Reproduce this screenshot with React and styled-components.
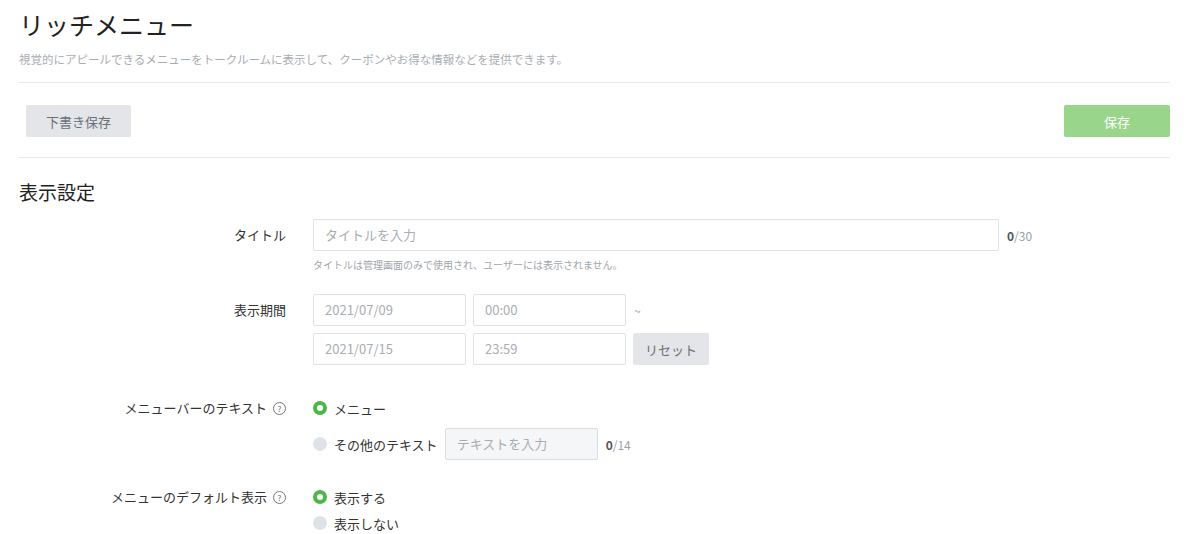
import React from 'react';
import styled, { createGlobalStyle } from 'styled-components';

const Global = createGlobalStyle`
  body { margin: 0; background: #fff; font-family: "Noto Sans CJK JP", "Noto Sans", sans-serif; color: #333; }
`;

const Page = styled.div`
  padding: 6px 30px 0 19px;
`;

const Title = styled.h1`
  margin: 0;
  font-size: 25px;
  font-weight: 400;
  line-height: 36px;
  color: #222;
`;

const Sub = styled.p`
  margin: 9px 0 0;
  font-size: 11.5px;
  color: #a8adb3;
  line-height: 16px;
`;

const Divider = styled.hr`
  border: none;
  border-top: 1px solid #e6e8eb;
  margin: ${p => p.$m || '0'};
`;

const Toolbar = styled.div`
  display: flex;
  justify-content: space-between;
  padding: 0 0 0 7px;
  margin: 22px 0 20px;
`;

const Button = styled.button`
  height: 32px;
  width: ${p => p.$w || '105px'};
  border: none;
  border-radius: 2px;
  font-family: inherit;
  font-size: 13px;
  background: ${p => (p.$primary ? '#99d58a' : '#e3e5e8')};
  color: ${p => (p.$primary ? '#fff' : '#6b7078')};
`;

const Section = styled.h2`
  margin: 20px 0 13px;
  font-size: 19px;
  font-weight: 400;
  color: #222;
  line-height: 28px;
`;

const Row = styled.div`
  display: grid;
  grid-template-columns: 267px 1fr;
  column-gap: 27px;
  margin-bottom: ${p => p.$mb || '0'};
`;

const Label = styled.div`
  text-align: right;
  font-size: 13px;
  color: #333;
  line-height: 32px;
  display: flex;
  justify-content: flex-end;
  align-items: center;
  gap: 6px;
  height: ${p => p.$h || '32px'};
`;

const Help = styled.span`
  width: 11px;
  height: 11px;
  border: 1px solid #777;
  border-radius: 50%;
  font-size: 8px;
  line-height: 11px;
  text-align: center;
  color: #666;
  display: inline-block;
`;

const Field = styled.div`
  display: flex;
  flex-direction: column;
  gap: ${p => p.$gap || '0'};
`;

const Line = styled.div`
  display: flex;
  align-items: center;
  gap: 7px;
  height: ${p => p.$h || 'auto'};
`;

const Input = styled.div`
  box-sizing: border-box;
  width: ${p => p.$w};
  height: 32px;
  border: 1px solid ${p => (p.$disabled ? '#d9dce0' : '#dfe1e5')};
  background: ${p => (p.$disabled ? '#f5f6f7' : '#fff')};
  border-radius: 2px;
  padding: 0 11px;
  font-size: 13px;
  line-height: 30px;
  color: #a8adb3;
`;

const Count = styled.span`
  font-size: 12px;
  color: #9a9fa6;
  margin-left: 1px;
  b { color: #555; font-weight: 700; }
`;

const Note = styled.div`
  font-size: 10px;
  color: #a0a5ab;
  margin-top: 6px;
`;

const Radio = styled.span`
  box-sizing: border-box;
  width: 14px;
  height: 14px;
  border-radius: 50%;
  background: ${p => (p.$on ? '#fff' : '#dfe2e6')};
  border: ${p => (p.$on ? '4px solid #4cb648' : 'none')};
  flex: none;
`;

const RadioText = styled.span`
  font-size: 13px;
  color: #333;
`;

const Choice = ({ on, children }) => (
  <Line $h="26px">
    <Radio $on={on} />
    <RadioText>{children}</RadioText>
  </Line>
);

export default function App() {
  return (
    <Page>
      <Global />
      <Title>リッチメニュー</Title>
      <Sub>視覚的にアピールできるメニューをトークルームに表示して、クーポンやお得な情報などを提供できます。</Sub>
      <Divider $m="15px 0 0" />
      <Toolbar>
        <Button>下書き保存</Button>
        <Button $primary $w="106px">保存</Button>
      </Toolbar>
      <Divider />
      <Section>表示設定</Section>
      <Row $mb="22px">
        <Label>タイトル</Label>
        <Field>
          <Line>
            <Input $w="686px">タイトルを入力</Input>
            <Count><b>0</b>/30</Count>
          </Line>
          <Note>タイトルは管理画面のみで使用され、ユーザーには表示されません。</Note>
        </Field>
      </Row>
      <Row $mb="30px">
        <Label>表示期間</Label>
        <Field $gap="7px">
          <Line>
            <Input $w="153px">2021/07/09</Input>
            <Input $w="153px">00:00</Input>
            <Count>~</Count>
          </Line>
          <Line>
            <Input $w="153px">2021/07/15</Input>
            <Input $w="153px">23:59</Input>
            <Button $w="76px">リセット</Button>
          </Line>
        </Field>
      </Row>
      <Row $mb="24px">
        <Label $h="26px">メニューバーのテキスト <Help>?</Help></Label>
        <Field $gap="7px">
          <Choice on>メニュー</Choice>
          <Line>
            <Radio />
            <RadioText>その他のテキスト</RadioText>
            <Input $w="153px" $disabled>テキストを入力</Input>
            <Count><b>0</b>/14</Count>
          </Line>
        </Field>
      </Row>
      <Row>
        <Label $h="26px">メニューのデフォルト表示 <Help>?</Help></Label>
        <Field>
          <Choice on>表示する</Choice>
          <Choice>表示しない</Choice>
        </Field>
      </Row>
    </Page>
  );
}
